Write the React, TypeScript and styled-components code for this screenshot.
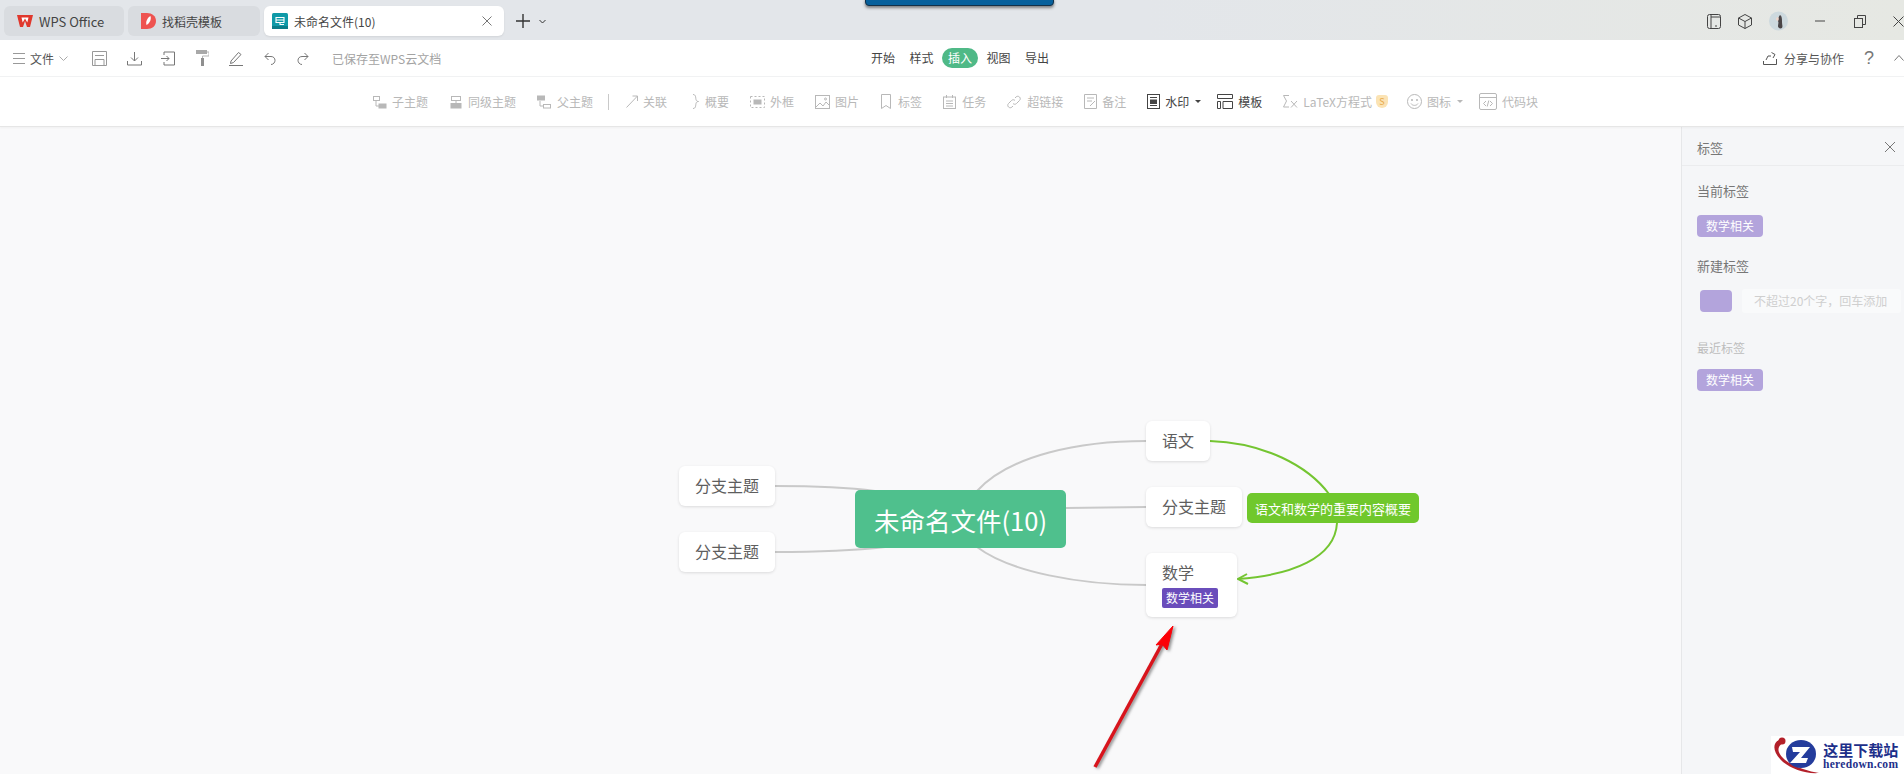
import styled, { createGlobalStyle } from "styled-components";
import { ReactNode } from "react";

const GlobalStyle = createGlobalStyle`
  html, body {
    margin: 0;
    padding: 0;
    overflow: hidden;
    background: #f9f9fa;
  }
  * {
    box-sizing: border-box;
  }
  body {
    font-family: "Noto Sans CJK SC", "Noto Sans", sans-serif;
  }
`;

const Page = styled.div`
  width: 1904px;
  height: 774px;
  display: flex;
  flex-direction: column;
  overflow: hidden;
`;

/* ---------- title bar ---------- */
const TitleBar = styled.div`
  position: relative;
  height: 40px;
  flex: none;
  display: flex;
  align-items: flex-start;
  gap: 4px;
  padding: 6px 0 0 4px;
  background: linear-gradient(90deg, #e3e6ea 0%, #e3e6ea 60%, #e6e8e3 100%);
`;
const Tab = styled.div<{ $w: number; $active?: boolean; $fs?: number }>`
  width: ${(p) => p.$w}px;
  height: 30px;
  display: flex;
  align-items: center;
  gap: 6px;
  padding: 0 12px 0 ${(p) => (p.$active ? 8 : 13)}px;
  border-radius: 6px;
  font-size: ${(p) => p.$fs ?? 12}px;
  color: #444;
  background: ${(p) => (p.$active ? "#ffffff" : "#d9dce0")};
  box-shadow: ${(p) => (p.$active ? "0 1px 2px rgba(0,0,0,.08)" : "none")};
  svg {
    flex: none;
  }
`;
const TabClose = styled.svg`
  margin-left: auto;
`;
const AddTab = styled.div`
  height: 30px;
  margin-left: 8px;
  display: flex;
  align-items: center;
  gap: 9px;
  color: #333;
`;
const WindowTools = styled.div`
  height: 30px;
  margin-left: auto;
  display: flex;
  align-items: center;
  color: #444;
`;
const WindowTool = styled.span<{ $w: number }>`
  width: ${(p) => p.$w}px;
  display: flex;
  align-items: center;
`;
const TopBanner = styled.div`
  position: absolute;
  top: -2px;
  left: 865px;
  width: 189px;
  height: 8px;
  border: 1px solid #123048;
  border-radius: 0 0 4px 4px;
  background: #06609c;
  box-shadow: 0 2px 3px rgba(0, 0, 0, 0.45);
`;

/* ---------- menu bar ---------- */
const MenuBar = styled.div`
  height: 37px;
  flex: none;
  display: grid;
  grid-template-columns: 865px auto 1fr;
  align-items: center;
  background: #fff;
  border-bottom: 1px solid #f1f2f3;
`;
const QuickTools = styled.div`
  display: flex;
  align-items: center;
  padding-left: 13px;
  color: #777;
`;
const FileMenu = styled.div`
  width: 79px;
  display: flex;
  align-items: center;
  gap: 5px;
  font-size: 12px;
  color: #555;
`;
const QuickIcon = styled.span<{ $w: number }>`
  width: ${(p) => p.$w}px;
  display: flex;
  align-items: center;
`;
const SavedNote = styled.span`
  font-size: 12px;
  color: #a3a3a3;
  white-space: nowrap;
`;
const MenuTabs = styled.div`
  display: flex;
  gap: 2.5px;
`;
const MenuTab = styled.div<{ $active?: boolean }>`
  width: 36px;
  height: 20px;
  border-radius: 10px;
  font-size: 12px;
  line-height: 20px;
  text-align: center;
  color: ${(p) => (p.$active ? "#fff" : "#444")};
  background: ${(p) => (p.$active ? "#4fb987" : "transparent")};
`;
const MenuRight = styled.div`
  display: flex;
  align-items: center;
  justify-content: flex-end;
  gap: 7px;
  font-size: 12px;
  color: #555;
`;
const HelpMark = styled.span`
  width: 10px;
  margin: 0 13px;
  font-family: "Liberation Sans", sans-serif;
  font-size: 18px;
  color: #777;
`;

/* ---------- tool bar ---------- */
const ToolBar = styled.div`
  position: relative;
  z-index: 2;
  height: 50px;
  flex: none;
  display: flex;
  align-items: center;
  gap: 21px;
  padding-left: 373px;
  background: #fff;
  border-bottom: 1px solid #e6e6e6;
  box-shadow: 0 1px 2px rgba(0, 0, 0, 0.04);
`;
const ToolItem = styled.div<{ $on?: boolean }>`
  display: flex;
  align-items: center;
  gap: 5px;
  font-size: 12px;
  white-space: nowrap;
  color: ${(p) => (p.$on ? "#444" : "#b8b8b8")};
`;
const ToolDivider = styled.div`
  width: 1px;
  height: 16px;
  margin: 0 -4px 0 -6px;
  background: #c9c9c9;
`;
const Caret = styled.span`
  width: 0;
  height: 0;
  margin: 0 -5px 0 1px;
  border: 3px solid transparent;
  border-top: 3px solid currentColor;
  border-bottom: 0;
`;
const CoinBadge = styled.span`
  width: 12px;
  height: 13px;
  margin-left: -1px;
  margin-right: -2px;
  border-radius: 3px 3px 6px 6px;
  background: #fbe3b4;
  color: #e8a94a;
  font-size: 9px;
  line-height: 13px;
  text-align: center;
`;

/* ---------- main area ---------- */
const Main = styled.div`
  flex: 1;
  min-height: 0;
  display: flex;
`;
const Canvas = styled.div`
  position: relative;
  flex: 1;
  background: #f9f9fa;
  overflow: hidden;
`;
const Lines = styled.svg`
  position: absolute;
  top: 0;
  left: 0;
`;
const Node = styled.div<{ $x: number; $y: number; $w: number; $h: number }>`
  position: absolute;
  left: ${(p) => p.$x}px;
  top: ${(p) => p.$y - 127}px;
  width: ${(p) => p.$w}px;
  height: ${(p) => p.$h}px;
  padding: 0 16px 2px;
  display: flex;
  align-items: center;
  border-radius: 6px;
  background: #fff;
  color: #5e5e5e;
  font-size: 16px;
  white-space: nowrap;
  box-shadow: 0 1px 3px rgba(0, 0, 0, 0.12);
`;
const RootNode = styled(Node)`
  justify-content: center;
  padding: 0;
  border-radius: 5px;
  background: #4fc08d;
  color: #fff;
  font-size: 25.5px;
  box-shadow: none;
`;
const SummaryNode = styled(Node)`
  justify-content: center;
  padding: 0;
  border-radius: 5px;
  background: #70c82c;
  color: #fff;
  font-size: 13px;
  box-shadow: none;
`;
const TaggedNode = styled(Node)`
  flex-direction: column;
  align-items: flex-start;
  justify-content: flex-start;
  padding-top: 7px;
  gap: 4px;
`;
const NodeTag = styled.span`
  width: 56px;
  height: 20px;
  border-radius: 2px;
  background: #6a4dbb;
  color: #fff;
  font-size: 12px;
  line-height: 20px;
  text-align: center;
`;

/* ---------- side panel ---------- */
const Panel = styled.aside`
  position: relative;
  width: 223px;
  flex: none;
  background: #f5f6f8;
  border-left: 1px solid #e6e7e9;
`;
const PanelHeader = styled.div`
  height: 39px;
  display: flex;
  align-items: center;
  justify-content: space-between;
  padding: 2px 9px 0 15px;
  border-bottom: 1px solid #ebecee;
  font-size: 13px;
  color: #777;
`;
const PanelBody = styled.div`
  padding: 16px 0 0 15px;
  display: flex;
  flex-direction: column;
  align-items: flex-start;
`;
const SectionTitle = styled.div<{ $muted?: boolean; $top?: number }>`
  height: 18px;
  margin-top: ${(p) => p.$top ?? 0}px;
  font-size: ${(p) => (p.$muted ? 12 : 13)}px;
  line-height: 18px;
  color: ${(p) => (p.$muted ? "#bdbdbd" : "#777")};
`;
const Tag = styled.div<{ $top: number }>`
  width: 66px;
  height: 22px;
  margin-top: ${(p) => p.$top}px;
  border-radius: 4px;
  background: #b3a4dc;
  color: #fff;
  font-size: 12px;
  line-height: 22px;
  text-align: center;
`;
const NewTagRow = styled.div`
  margin: 14px 0 0 3px;
  display: flex;
  align-items: center;
  gap: 10px;
`;
const Swatch = styled.div`
  width: 32px;
  height: 22px;
  border-radius: 4px;
  background: #b3a4dc;
`;
const TagInput = styled.div`
  width: 159px;
  height: 24px;
  padding-left: 12px;
  border-radius: 3px;
  background: #f9fafb;
  color: #cfcfcf;
  font-size: 12px;
  line-height: 24px;
  white-space: nowrap;
`;
const Watermark = styled.div`
  position: absolute;
  right: 0;
  bottom: 0;
  width: 133px;
  height: 38px;
  display: flex;
  align-items: center;
  gap: 2px;
  background: #fff;
`;
const WatermarkText = styled.div`
  display: flex;
  flex-direction: column;
  align-items: flex-end;
  color: #1d2f8a;
  font-weight: 700;
`;
const WatermarkTitle = styled.span`
  font-size: 15px;
  line-height: 17px;
  white-space: nowrap;
`;
const WatermarkUrl = styled.span`
  font-family: "Liberation Serif", serif;
  font-size: 11.5px;
  line-height: 12px;
  letter-spacing: 0.3px;
`;

/* ---------- icons ---------- */
const Ico = ({ w = 16, h = 16, children }: { w?: number; h?: number; children: ReactNode }) => (
  <svg width={w} height={h} viewBox={`0 0 ${w} ${h}`} fill="none" stroke="currentColor" strokeWidth="1">
    {children}
  </svg>
);

const ChildIcon = () => (
  <Ico w={14} h={14}>
    <rect x="0.5" y="1.5" width="6" height="4" />
    <path d="M3 6v5h3" />
    <rect x="6" y="9" width="7" height="4" fill="currentColor" />
  </Ico>
);
const SiblingIcon = () => (
  <Ico w={14} h={14}>
    <rect x="2.5" y="1.5" width="9" height="4" />
    <path d="M7 6v2" />
    <rect x="2" y="8.5" width="10" height="4.5" fill="currentColor" />
  </Ico>
);
const ParentIcon = () => (
  <Ico w={15} h={14}>
    <rect x="0.5" y="1" width="7" height="4" fill="currentColor" />
    <path d="M3 6v5h3" />
    <rect x="6.5" y="9.5" width="7" height="3.5" />
  </Ico>
);

function App() {
  return (
    <Page>
      <GlobalStyle />
      <TitleBar>
        <TopBanner />
        <Tab $w={120} $fs={13}>
          <svg width="16" height="14" viewBox="0 0 16 14">
            <path d="M0 1h16l-3 12h-3L8 7l-2 6H3z" fill="#e0382d" />
            <path d="M4.500 3.500h7l-1.200 5-2.300-4-2.300 4z" fill="#fff" />
          </svg>
          WPS Office
        </Tab>
        <Tab $w={132}>
          <svg width="15" height="18" viewBox="0 0 15 18">
            <path d="M0 1h6c5 0 9 3 9 8s-4 8-9 8H0z" fill="#ee5350" />
            <path d="M9.500 4c1 3-.5 7-4 9-1-3 .5-7 4-9z" fill="#fff" />
          </svg>
          找稻壳模板
        </Tab>
        <Tab $w={240} $active>
          <svg width="16" height="16" viewBox="0 0 16 16">
            <rect width="16" height="16" rx="1.500" fill="#0f9aa8" />
            <rect y="13" width="16" height="3" fill="#0b7c88" />
            <path d="M4 4.500h8v5H4zM4 7h8M8 9.500v2h4" fill="none" stroke="#fff" strokeWidth="1.100" />
          </svg>
          未命名文件(10)
          <TabClose width="10" height="10" viewBox="0 0 10 10" stroke="#777" fill="none">
            <path d="M.5.500l9 9M9.500.500l-9 9" />
          </TabClose>
        </Tab>
        <AddTab>
          <svg width="14" height="14" viewBox="0 0 14 14" stroke="currentColor" strokeWidth="1.400">
            <path d="M7 0v14M0 7h14" />
          </svg>
          <svg width="7" height="5" viewBox="0 0 7 5" stroke="currentColor" fill="none">
            <path d="M.5 1l3 3 3-3" />
          </svg>
        </AddTab>
        <WindowTools>
          <WindowTool $w={31}>
            <Ico w={14} h={15}>
              <rect x="0.500" y="0.500" width="13" height="14" rx="2" />
              <path d="M4 .5v14M4 3h9" />
              <path d="M8 12h2" />
            </Ico>
          </WindowTool>
          <WindowTool $w={31}>
            <Ico w={14} h={15}>
              <path d="M7 .5l6.500 3.500v7L7 14.500.5 11V4zM.5 4L7 7.500 13.500 4M7 7.500v7" />
            </Ico>
          </WindowTool>
          <WindowTool $w={46}>
            <svg width="19" height="20" viewBox="0 0 19 20">
              <circle cx="9.500" cy="10" r="9.500" fill="#cdd9de" />
              <path d="M11 4c2 1 2 4 2 7s1 4 0 6c-2 1-4 0-4-2 0-2 1-3 0-5 0-3 1-5 2-6z" fill="#4a4547" />
              <path d="M9 6c1 1 1 3 0 4-1 0-2-1-2-2s1-2 2-2z" fill="#eed6cc" />
            </svg>
          </WindowTool>
          <WindowTool $w={39}>
            <svg width="10" height="2" viewBox="0 0 10 2" stroke="currentColor">
              <path d="M0 1h10" />
            </svg>
          </WindowTool>
          <WindowTool $w={39}>
            <Ico w={12} h={13}>
              <rect x="0.500" y="3.500" width="8" height="9" />
              <path d="M3.500 3.500v-3h8v9h-3" />
            </Ico>
          </WindowTool>
          <WindowTool $w={11}>
            <svg width="11" height="11" viewBox="0 0 11 11" stroke="currentColor" fill="none">
              <path d="M.5.500l10 10M10.500.500l-10 10" />
            </svg>
          </WindowTool>
        </WindowTools>
      </TitleBar>

      <MenuBar>
        <QuickTools>
          <FileMenu>
            <svg width="12" height="11" viewBox="0 0 12 11" stroke="#999">
              <path d="M0 .5h12M0 5.500h12M0 10.500h12" />
            </svg>
            文件
            <svg width="9" height="5" viewBox="0 0 9 5" stroke="#aaa" fill="none">
              <path d="M.5.500l4 4 4-4" />
            </svg>
          </FileMenu>
          <QuickIcon $w={35}>
            <Ico w={15} h={15}>
              <path d="M.5.500h14v14H.5zM3 4.500h9M3 14.500v-6h9v6" stroke="#999" />
            </Ico>
          </QuickIcon>
          <QuickIcon $w={34}>
            <Ico w={15} h={15}>
              <path d="M7.500 1v9M4 6.500l3.500 3.500L11 6.500M.5 10v4h14v-4" />
            </Ico>
          </QuickIcon>
          <QuickIcon $w={35}>
            <Ico w={14} h={15}>
              <path d="M3 4V1h10.500v13H3v-3M0 7.500h8M5.500 5l2.500 2.500L5.500 10" />
            </Ico>
          </QuickIcon>
          <QuickIcon $w={33}>
            <svg width="13" height="16" viewBox="0 0 13 16">
              <path d="M0 0h11v4H0z" fill="#a8a8a8" />
              <path d="M11 2h2v4H6.500v2" fill="none" stroke="#b5b5b5" />
              <path d="M5 8h3v8H5z" fill="#8f8f8f" />
            </svg>
          </QuickIcon>
          <QuickIcon $w={35}>
            <Ico w={14} h={15}>
              <path d="M2 10L9.500 1.500l2.500 2L4.500 11.500l-3 1zM0 14.500h14" />
            </Ico>
          </QuickIcon>
          <QuickIcon $w={33}>
            <Ico w={12} h={13}>
              <path d="M4.500 1L1 4.500 4.500 8M1 4.500h6c2.500 0 4 1.800 4 3.800S9.500 12.500 7 12.500" />
            </Ico>
          </QuickIcon>
          <QuickIcon $w={35}>
            <Ico w={12} h={13}>
              <path d="M7.500 1L11 4.500 7.500 8M11 4.500H5c-2.500 0-4 1.800-4 3.800s1.500 4.200 4 4.200" />
            </Ico>
          </QuickIcon>
          <SavedNote>已保存至WPS云文档</SavedNote>
        </QuickTools>
        <MenuTabs>
          <MenuTab>开始</MenuTab>
          <MenuTab>样式</MenuTab>
          <MenuTab $active>插入</MenuTab>
          <MenuTab>视图</MenuTab>
          <MenuTab>导出</MenuTab>
        </MenuTabs>
        <MenuRight>
          <svg width="14" height="14" viewBox="0 0 14 14" fill="none" stroke="currentColor">
            <path d="M3 9l2-4h3M8.500 1.500L12 3.500l-2 3.500M.5 10v3.500h13V8" />
          </svg>
          分享与协作
          <HelpMark>?</HelpMark>
          <svg width="10" height="6" viewBox="0 0 10 6" stroke="#777" fill="none">
            <path d="M.5 5.500l4.500-5 4.500 5" />
          </svg>
        </MenuRight>
      </MenuBar>

      <ToolBar>
        <ToolItem><ChildIcon />子主题</ToolItem>
        <ToolItem><SiblingIcon />同级主题</ToolItem>
        <ToolItem><ParentIcon />父主题</ToolItem>
        <ToolDivider />
        <ToolItem>
          <Ico w={12} h={13}>
            <path d="M.5 12.500L11.500 1M6.500 1h5v5" />
          </Ico>
          关联
        </ToolItem>
        <ToolItem>
          <Ico w={12} h={15}>
            <path d="M5 .5c3 0 2.500 3 3 5 .3 1.500 1.500 2 2.500 2-1 0-2.200.5-2.500 2-.5 2 0 5-3 5" />
          </Ico>
          概要
        </ToolItem>
        <ToolItem>
          <Ico w={15} h={14}>
            <rect x="0.500" y="1.500" width="14" height="11" strokeDasharray="2 2" />
            <rect x="4" y="5" width="7" height="4" fill="currentColor" />
          </Ico>
          外框
        </ToolItem>
        <ToolItem>
          <Ico w={15} h={14}>
            <rect x="0.500" y="0.500" width="14" height="13" />
            <path d="M1 12l4-4 3 3 3-4 3 3" />
            <circle cx="10.500" cy="4" r="1" />
          </Ico>
          图片
        </ToolItem>
        <ToolItem>
          <Ico w={13} h={15}>
            <path d="M1.500.5h9v14L6 11.500l-4.500 3z" />
          </Ico>
          标签
        </ToolItem>
        <ToolItem>
          <Ico w={14} h={14}>
            <rect x="0.500" y="2" width="12" height="11.500" />
            <path d="M3.500 0v3M9.500 0v3M3 6h7M3 8.500h7M3 11h7" />
          </Ico>
          任务
        </ToolItem>
        <ToolItem>
          <Ico w={15} h={14}>
            <path d="M6 8.500c1 1 2.500 1 3.500 0l3-3c1-1 1-2.500 0-3.500s-2.500-1-3.500 0L8 3M8 5.500c-1-1-2.500-1-3.500 0l-3 3c-1 1-1 2.500 0 3.500s2.500 1 3.500 0l1-1" />
          </Ico>
          超链接
        </ToolItem>
        <ToolItem>
          <Ico w={13} h={15}>
            <path d="M.5.500h12v14H.5zM3 4h7M3 7h5M6 12l5-5" />
          </Ico>
          备注
        </ToolItem>
        <ToolItem $on>
          <Ico w={13} h={15}>
            <rect x="0.500" y="0.500" width="12" height="14" />
            <path d="M3 3.500h7M3 11.500h7" />
            <rect x="3.500" y="6" width="6" height="3.500" fill="currentColor" />
          </Ico>
          水印
          <Caret />
        </ToolItem>
        <ToolItem $on>
          <Ico w={16} h={15}>
            <path d="M.5.500h15v4H.5zM.5 7.500h3v7h-3zM6 7.500h9.500v7H6z" />
          </Ico>
          模板
        </ToolItem>
        <ToolItem>
          <Ico w={15} h={13}>
            <path d="M6 .5H.5l3 5.500-3 6H6" />
            <path d="M8 6l6 6.500M14 6l-6 6.500" />
          </Ico>
          LaTeX方程式
          <CoinBadge>S</CoinBadge>
        </ToolItem>
        <ToolItem>
          <Ico w={15} h={15}>
            <circle cx="7.500" cy="7.500" r="7" />
            <circle cx="5" cy="6" r="0.600" fill="currentColor" />
            <circle cx="10" cy="6" r="0.600" fill="currentColor" />
            <path d="M4 9.500c1.500 2.500 5.500 2.500 7 0" />
          </Ico>
          图标
          <Caret />
        </ToolItem>
        <ToolItem>
          <Ico w={18} h={17}>
            <rect x="0.500" y="0.500" width="17" height="16" rx="1.500" />
            <path d="M.5 4.500h17M7 8l-2.500 2.500L7 13M11 8l2.500 2.500L11 13M9.800 7.500l-1.600 6" />
          </Ico>
          代码块
        </ToolItem>
      </ToolBar>

      <Main>
        <Canvas>
          <Lines width="1681" height="647" viewBox="0 127 1681 647" fill="none">
            <g stroke="#c9c9c9" strokeWidth="2">
              <path d="M775 486C810 486 845 487 875 491" />
              <path d="M775 552C815 552 850 551 885 547" />
              <path d="M977 491C1010 455 1080 441 1146 441" />
              <path d="M1066 508L1146 507" />
              <path d="M977 547C1010 572 1080 585 1146 585" />
            </g>
            <g stroke="#74c531" strokeWidth="2">
              <path d="M1210 441C1265 443 1308 466 1329 494" />
              <path d="M1337 523C1335 558 1292 575 1238 579" />
              <path d="M1247 574L1238 579L1248 584" />
            </g>
            <g filter="drop-shadow(2px 1px 1.500px rgba(70,70,70,.6))">
              <path d="M1095 767L1163 642" stroke="#d8141c" strokeWidth="3.500" />
              <path d="M1173 626L1167 650L1162 644L1156 645Z" fill="#fb0007" stroke="#fb0007" />
            </g>
          </Lines>

          <Node $x={679} $y={466} $w={96} $h={40}>分支主题</Node>
          <Node $x={679} $y={532} $w={96} $h={40}>分支主题</Node>
          <RootNode $x={855} $y={490} $w={211} $h={58}>未命名文件(10)</RootNode>
          <Node $x={1146} $y={421} $w={64} $h={40}>语文</Node>
          <Node $x={1146} $y={487} $w={96} $h={40}>分支主题</Node>
          <TaggedNode $x={1146} $y={553} $w={91} $h={64}>
            数学
            <NodeTag>数学相关</NodeTag>
          </TaggedNode>
          <SummaryNode $x={1247} $y={493} $w={172} $h={30}>语文和数学的重要内容概要</SummaryNode>
        </Canvas>

        <Panel>
          <PanelHeader>
            标签
            <svg width="10" height="10" viewBox="0 0 10 10" stroke="#777" fill="none">
              <path d="M0 0l10 10M10 0L0 10" />
            </svg>
          </PanelHeader>
          <PanelBody>
            <SectionTitle>当前标签</SectionTitle>
            <Tag $top={15}>数学相关</Tag>
            <SectionTitle $top={20}>新建标签</SectionTitle>
            <NewTagRow>
              <Swatch />
              <TagInput>不超过20个字，回车添加</TagInput>
            </NewTagRow>
            <SectionTitle $muted $top={26}>最近标签</SectionTitle>
            <Tag $top={12}>数学相关</Tag>
          </PanelBody>
          <Watermark>
            <svg width="50" height="38" viewBox="0 0 50 38">
              <path d="M8 4C0 8 3 18 12 26c9 7 22 12 36 11C36 35 20 30 12 22 7 17 5 11 12 7z" fill="#b3202a" />
              <circle cx="11" cy="5" r="3.500" fill="#b3202a" />
              <ellipse cx="30" cy="18" rx="15" ry="14" fill="#243c9c" />
              <path d="M21 11h18L30 22h7l-2 5H19l10-11h-7z" fill="#fff" />
            </svg>
            <WatermarkText>
              <WatermarkTitle>这里下载站</WatermarkTitle>
              <WatermarkUrl>heredown.com</WatermarkUrl>
            </WatermarkText>
          </Watermark>
        </Panel>
      </Main>
    </Page>
  );
}

export default App;
